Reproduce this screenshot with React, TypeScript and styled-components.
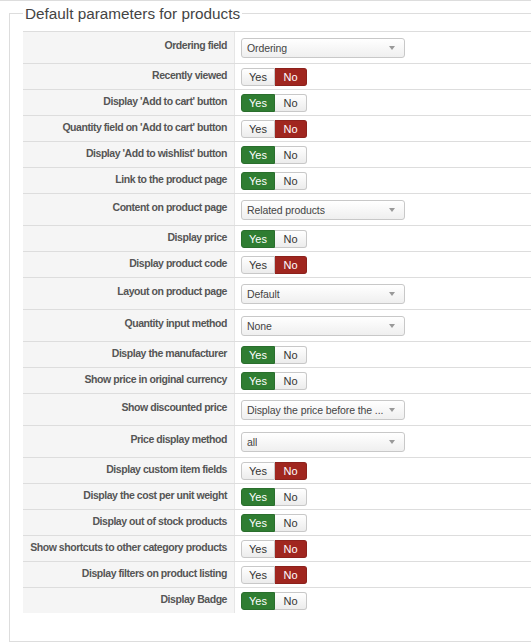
import React from 'react';
import styled, { createGlobalStyle } from 'styled-components';

const GlobalStyle = createGlobalStyle`
  html, body {
    margin: 0;
    padding: 0;
    background: #fff;
    overflow: hidden;
  }
  body {
    font-family: "Liberation Sans", Arial, sans-serif;
    color: #333;
  }
`;

const Page = styled.div`
  width: 620px;
  border-top: 1px solid #ddd;
  padding: 0 0 0 9px;
`;

const Fieldset = styled.fieldset`
  margin: 4px 0 0 0;
  padding: 9px 13px 28px 13px;
  border: 1px solid #ddd;
  min-width: 0;
`;

const Legend = styled.legend`
  padding: 0 2px;
  margin-left: 0;
  font-size: 15.3px;
  line-height: 17px;
  color: #444;
`;

const Table = styled.div`
  display: flex;
  flex-direction: column;
`;

const Row = styled.div<{ $tall?: boolean }>`
  display: flex;
  box-sizing: border-box;
  height: ${p => (p.$tall ? 32 : 26)}px;
  border-top: 1px solid #ddd;
`;

const Label = styled.div<{ $tall?: boolean }>`
  width: 212px;
  flex-shrink: 0;
  box-sizing: border-box;
  background: #f5f5f5;
  border-right: 1px solid #e6e6e6;
  padding: ${p => (p.$tall ? 7 : 5)}px 7px 0 0;
  text-align: right;
  font-size: 10.5px;
  line-height: 13px;
  font-weight: bold;
  letter-spacing: -0.45px;
  color: #555;
  white-space: nowrap;
`;

const Control = styled.div`
  display: flex;
  align-items: center;
  padding: 0 6px;
`;

const Toggle = styled.div`
  display: flex;
  height: 18px;
`;

const ToggleButton = styled.span<{ $active: boolean; $tone: 'yes' | 'no'; $w: number }>`
  box-sizing: border-box;
  width: ${p => p.$w}px;
  display: flex;
  align-items: center;
  justify-content: center;
  font-size: 11px;
  border: 1px solid ${p => (p.$active ? (p.$tone === 'yes' ? '#2a6e2d' : '#8c211c') : '#c8c8c8')};
  background: ${p =>
    p.$active
      ? p.$tone === 'yes'
        ? '#2f7d32'
        : '#a0261f'
      : 'linear-gradient(#ffffff, #ececec)'};
  color: ${p => (p.$active ? '#fff' : '#333')};
  &:first-child {
    border-radius: 3px 0 0 3px;
  }
  &:last-child {
    border-radius: 0 3px 3px 0;
    border-left: none;
  }
`;

const Select = styled.div`
  box-sizing: border-box;
  width: 164px;
  height: 20px;
  display: flex;
  align-items: center;
  justify-content: space-between;
  gap: 6px;
  padding: 0 9px 0 5px;
  border: 1px solid #c8c8c8;
  border-radius: 3px;
  background: linear-gradient(#ffffff, #efefef);
  font-size: 10.5px;
  letter-spacing: -0.1px;
  color: #444;
`;

const SelectValue = styled.span`
  white-space: nowrap;
  overflow: hidden;
`;

const Caret = styled.span`
  flex-shrink: 0;
  width: 0;
  height: 0;
  border-left: 3px solid transparent;
  border-right: 3px solid transparent;
  border-top: 4px solid #999;
`;

type Field =
  | { label: string; kind: 'select'; value: string }
  | { label: string; kind: 'toggle'; yes: boolean };

const fields: Field[] = [
  { label: 'Ordering field', kind: 'select', value: 'Ordering' },
  { label: 'Recently viewed', kind: 'toggle', yes: false },
  { label: "Display 'Add to cart' button", kind: 'toggle', yes: true },
  { label: "Quantity field on 'Add to cart' button", kind: 'toggle', yes: false },
  { label: "Display 'Add to wishlist' button", kind: 'toggle', yes: true },
  { label: 'Link to the product page', kind: 'toggle', yes: true },
  { label: 'Content on product page', kind: 'select', value: 'Related products' },
  { label: 'Display price', kind: 'toggle', yes: true },
  { label: 'Display product code', kind: 'toggle', yes: false },
  { label: 'Layout on product page', kind: 'select', value: 'Default' },
  { label: 'Quantity input method', kind: 'select', value: 'None' },
  { label: 'Display the manufacturer', kind: 'toggle', yes: true },
  { label: 'Show price in original currency', kind: 'toggle', yes: true },
  { label: 'Show discounted price', kind: 'select', value: 'Display the price before the ...' },
  { label: 'Price display method', kind: 'select', value: 'all' },
  { label: 'Display custom item fields', kind: 'toggle', yes: false },
  { label: 'Display the cost per unit weight', kind: 'toggle', yes: true },
  { label: 'Display out of stock products', kind: 'toggle', yes: true },
  { label: 'Show shortcuts to other category products', kind: 'toggle', yes: false },
  { label: 'Display filters on product listing', kind: 'toggle', yes: false },
  { label: 'Display Badge', kind: 'toggle', yes: true },
];

const App = () => {
  return (
    <>
      <GlobalStyle />
      <Page>
        <Fieldset>
          <Legend>Default parameters for products</Legend>
          <Table>
            {fields.map(f => {
              const tall = f.kind === 'select';
              return (
                <Row key={f.label} $tall={tall}>
                  <Label $tall={tall}>{f.label}</Label>
                  <Control>
                    {f.kind === 'select' ? (
                      <Select>
                        <SelectValue>{f.value}</SelectValue>
                        <Caret />
                      </Select>
                    ) : (
                      <Toggle>
                        <ToggleButton $active={f.yes} $tone="yes" $w={34}>Yes</ToggleButton>
                        <ToggleButton $active={!f.yes} $tone="no" $w={32}>No</ToggleButton>
                      </Toggle>
                    )}
                  </Control>
                </Row>
              );
            })}
          </Table>
        </Fieldset>
      </Page>
    </>
  );
};

export default App;
